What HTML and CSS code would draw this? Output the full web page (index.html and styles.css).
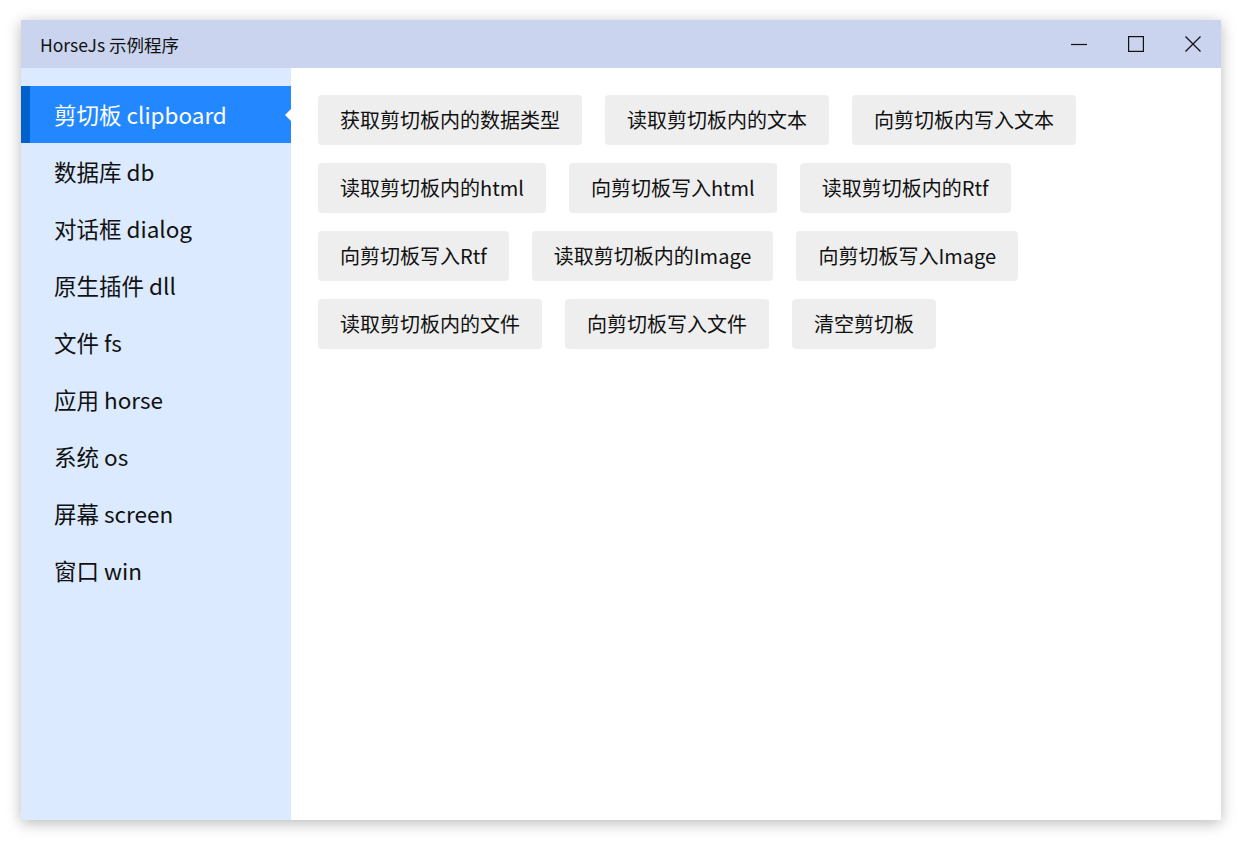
FILE: index.html
```html
<!DOCTYPE html>
<html>
<head>
<meta charset="utf-8">
<link rel="stylesheet" href="styles.css">
</head>
<body>
<div class="window">
  <div class="titlebar">
    <div class="title">HorseJs 示例程序</div>
    <div class="controls">
      <div class="ctl"><svg width="16" height="16" viewBox="0 0 16 16"><line x1="0" y1="8.5" x2="16" y2="8.5" stroke="#111" stroke-width="1.2"/></svg></div>
      <div class="ctl"><svg width="16" height="16" viewBox="0 0 16 16"><rect x="0.6" y="0.6" width="14.8" height="14.8" fill="none" stroke="#111" stroke-width="1.2"/></svg></div>
      <div class="ctl"><svg width="16" height="16" viewBox="0 0 16 16"><path d="M0.5 0.5 L15.5 15.5 M15.5 0.5 L0.5 15.5" stroke="#111" stroke-width="1.3" fill="none"/></svg></div>
    </div>
  </div>
  <div class="body">
    <div class="sidebar">
      <div class="item active">剪切板 clipboard</div>
      <div class="item">数据库 db</div>
      <div class="item">对话框 dialog</div>
      <div class="item">原生插件 dll</div>
      <div class="item">文件 fs</div>
      <div class="item">应用 horse</div>
      <div class="item">系统 os</div>
      <div class="item">屏幕 screen</div>
      <div class="item">窗口 win</div>
    </div>
    <div class="content">
      <div class="btn">获取剪切板内的数据类型</div>
      <div class="btn">读取剪切板内的文本</div>
      <div class="btn">向剪切板内写入文本</div>
      <div class="btn">读取剪切板内的html</div>
      <div class="btn">向剪切板写入html</div>
      <div class="btn">读取剪切板内的Rtf</div>
      <div class="btn">向剪切板写入Rtf</div>
      <div class="btn">读取剪切板内的Image</div>
      <div class="btn">向剪切板写入Image</div>
      <div class="btn">读取剪切板内的文件</div>
      <div class="btn">向剪切板写入文件</div>
      <div class="btn">清空剪切板</div>
    </div>
  </div>
</div>
</body>
</html>
```
FILE: styles.css
```css
html, body {
  margin: 0;
  padding: 0;
  background: #ffffff;
}
body {
  padding: 20px 25px 24px 21px;
  font-family: "Noto Sans CJK SC", "Noto Sans", sans-serif;
  color: #111;
}
.window {
  width: 1200px;
  height: 800px;
  display: flex;
  flex-direction: column;
  box-shadow: 0 3px 14px rgba(0, 0, 0, 0.28);
  background: #fff;
}
.titlebar {
  height: 48px;
  background: #cad4ee;
  display: flex;
  align-items: center;
  justify-content: space-between;
}
.title {
  padding-left: 19px;
  font-size: 17.5px;
  color: #111;
}
.controls {
  display: flex;
  height: 100%;
}
.ctl {
  width: 57px;
  height: 48px;
  display: flex;
  align-items: center;
  justify-content: center;
}
.ctl svg { display: block; }
.body {
  flex: 1;
  display: flex;
}
.sidebar {
  width: 270px;
  background: #dbeafe;
  padding-top: 18px;
}
.item {
  height: 57px;
  line-height: 56px;
  padding-left: 33px;
  font-size: 22.5px;
  color: #111;
  position: relative;
}
.item.active {
  background: #2388ff;
  color: #fff;
  border-left: 9px solid #0060cc;
  padding-left: 24px;
}
.item.active::after {
  content: "";
  position: absolute;
  right: 0;
  top: 50%;
  margin-top: -6px;
  border-top: 6px solid transparent;
  border-bottom: 6px solid transparent;
  border-right: 6px solid #fff;
}
.content {
  flex: 1;
  padding: 27px;
  display: flex;
  flex-wrap: wrap;
  align-content: flex-start;
  gap: 18px 23px;
}
.btn {
  height: 50px;
  line-height: 50px;
  padding: 0 22px;
  background: #eeeeee;
  border-radius: 4px;
  font-size: 20px;
  color: #111;
}
```
